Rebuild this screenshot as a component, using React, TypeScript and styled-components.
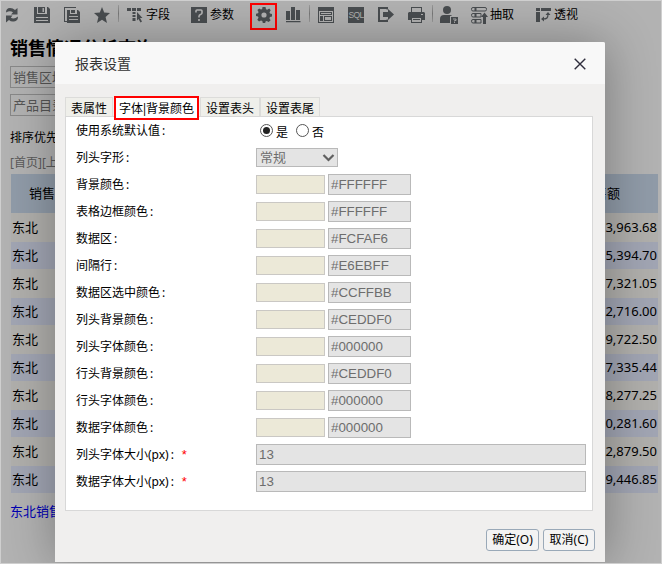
import React from "react";
import styled, { createGlobalStyle } from "styled-components";

const GlobalStyle = createGlobalStyle`
  * { box-sizing: border-box; }
  body {
    margin: 0;
    font-family: "Noto Sans", "Noto Sans CJK SC", sans-serif;
    font-size: 12px;
    color: #000;
  }
`;

const Page = styled.div`
  position: relative;
  width: 662px;
  height: 564px;
  overflow: hidden;
  background: #b2b2b2;
  border: 1px solid #cfcfcf;
`;

const Toolbar = styled.div`
  display: flex;
  align-items: center;
  height: 28px;
  color: #494d50;
`;

const Tool = styled.div<{ $gap: number }>`
  display: flex;
  flex: none;
  align-items: center;
  margin-left: ${(p) => p.$gap}px;
  svg { display: block; }
`;

const ToolText = styled.span<{ $gap: number }>`
  margin-left: ${(p) => p.$gap}px;
  width: 24px;
  line-height: 16px;
  white-space: nowrap;
  color: #000;
`;

const ActiveTool = styled.div`
  display: flex;
  flex: none;
  align-items: flex-start;
  justify-content: center;
  width: 27px;
  height: 27px;
  margin: 3px 0 0 16px;
  padding-top: 2px;
  border: 2px solid #fe0000;
`;

const Divider = styled.div<{ $gap: number }>`
  flex: none;
  width: 1px;
  height: 17px;
  margin: 0 0 3px ${(p) => p.$gap}px;
  background: linear-gradient(#9a9a9a, #777, #9a9a9a);
`;

const ReportTitle = styled.h1`
  margin: 6px 0 0 9px;
  height: 26px;
  font-size: 18px;
  line-height: 26px;
  font-weight: 700;
`;

const FilterBox = styled.div<{ $top: number }>`
  width: 160px;
  height: 22px;
  margin: ${(p) => p.$top}px 0 0 9px;
  padding-left: 2px;
  border: 1px solid #888;
  font-size: 13px;
  line-height: 20px;
  color: #555;
`;

const SortLine = styled.div`
  margin: 12px 0 0 9px;
  height: 20px;
  line-height: 20px;
`;

const Pager = styled.div`
  margin: 5px 0 0 9px;
  height: 20px;
  line-height: 20px;
  color: #5a5a5a;
`;

const Table = styled.div`
  width: 647px;
  margin: 1px 0 0 10px;
  font-size: 13px;
`;

const TableHead = styled.div`
  display: flex;
  justify-content: space-between;
  height: 39px;
  padding: 0 38px 0 18px;
  line-height: 39px;
  font-size: 13px;
  background: #909ba8;
`;

const TableRow = styled.div<{ $alt: boolean }>`
  display: flex;
  justify-content: space-between;
  height: ${(p) => (p.$alt ? 27 : 29)}px;
  padding: 0 1px;
  line-height: ${(p) => (p.$alt ? 27 : 29)}px;
  background: ${(p) => (p.$alt ? "#a1a5b3" : "#b0afac")};
`;

const Summary = styled.div`
  margin: 8px 0 0 9px;
  line-height: 20px;
  font-size: 13px;
  color: #0000b2;
`;

const Dialog = styled.section`
  position: absolute;
  left: 54px;
  top: 41px;
  width: 550px;
  height: 520px;
  display: flex;
  flex-direction: column;
  background: #f0efee;
  border-radius: 2px 2px 0 0;
  box-shadow: 1px 1px 50px rgba(0, 0, 0, 0.32);
`;

const DialogHeader = styled.header`
  display: flex;
  justify-content: space-between;
  align-items: center;
  height: 42px;
  padding: 0 19px 0 20px;
  background: #f8f8f8;
  border-radius: 2px 2px 0 0;
  font-size: 14px;
  color: #333;
  svg { display: block; margin-top: 1px; }
`;

const TabBar = styled.nav`
  display: flex;
  align-items: flex-start;
  height: 20px;
  margin: 12px 0 0 10px;
`;

const Tab = styled.div<{ $width: number }>`
  flex: none;
  width: ${(p) => p.$width}px;
  height: 19px;
  margin-top: 1px;
  border: 1px solid #dcdcda;
  border-bottom: none;
  background: #efefea;
  line-height: 21px;
  text-align: center;
  white-space: nowrap;
`;

const ActiveTab = styled.div`
  position: relative;
  z-index: 1;
  display: flex;
  flex: none;
  justify-content: center;
  width: 85px;
  height: 24px;
  margin: 0 1px 0 1px;
  border: 2px solid #fe0000;
  background: #fff;
  line-height: 21px;
  white-space: nowrap;
`;

const Bar = styled.span`
  display: flex;
  justify-content: center;
  width: 3px;
`;

const Panel = styled.div`
  width: 528px;
  height: 395px;
  margin-left: 10px;
  border: 1px solid #d8d8d8;
  background: #fff;
`;

const FormRow = styled.div`
  display: flex;
  align-items: center;
  height: 27px;
  padding-left: 10px;
`;

const Label = styled.label`
  display: flex;
  width: 180px;
  line-height: 18px;
  padding-top: 1px;
`;

const Colon = styled.span`
  width: 13px;
  padding-left: 2px;
`;

const Required = styled.span`
  font-family: "Liberation Sans", sans-serif;
  font-size: 13px;
  color: #f00;
`;

const RadioOption = styled.span<{ $gap: number }>`
  display: flex;
  align-items: center;
  margin-left: ${(p) => p.$gap}px;
  svg { display: block; }
`;

const RadioText = styled.span`
  margin: 4px 0 0 3px;
  line-height: 18px;
`;

const Select = styled.div`
  display: flex;
  align-items: center;
  justify-content: space-between;
  width: 82px;
  height: 19px;
  padding: 0 2px 0 3px;
  border: 1px solid #b9b9b9;
  background: #e4e4e4;
  color: #6d6d6d;
  font-size: 13px;
  line-height: 17px;
`;

const Swatch = styled.div`
  width: 69px;
  height: 19px;
  margin-right: 3px;
  border: 1px solid #cac8c4;
  background: #ece9d8;
`;

const Field = styled.div<{ $width: number }>`
  width: ${(p) => p.$width}px;
  height: 21px;
  padding-left: 2px;
  border: 1px solid #b9b9b9;
  background: #e4e4e4;
  color: #6d6d6d;
  font: 13.333px/19px "Liberation Sans", sans-serif;
`;

const Footer = styled.footer`
  display: flex;
  justify-content: flex-end;
  gap: 4px;
  padding: 18px 10px 0 0;
`;

const Button = styled.button<{ $width: number }>`
  width: ${(p) => p.$width}px;
  height: 22px;
  padding: 0;
  border: 1px solid #9aa9b8;
  border-radius: 3px;
  background: #f3f3f3;
  font: inherit;
  line-height: 20px;
  white-space: nowrap;
  color: #000;
`;

const Svg = ({ w = 16, h = 16, children }: { w?: number; h?: number; children: React.ReactNode }) => (
  <svg width={w} height={h} viewBox={`0 0 ${w} ${h}`} fill="currentColor">
    {children}
  </svg>
);

const RefreshIcon = () => (
  <Svg w={14}>
    <path d="M1 5.500Q1 1 5 1Q8 1 10 3L12.500 1V7.500H6L8 5.300Q5 3.200 1 5.500z" />
    <path d="M13 9.500Q13 14 9 14.500Q6 15 4 13L1 15.500V8.500H7.500L5.800 10.700Q9 12.500 13 9.500z" />
  </Svg>
);

const SaveIcon = () => (
  <Svg>
    <path fillRule="evenodd" d="M0 0h3v7h10V0h1l2 2v14H0zM2 10v1h12v-1zM2 13v1h12v-1z" />
    <path d="M4 0h7v6H4z" />
    <path fill="#aaa" d="M8.500 1h1.500v4H8.500z" />
  </Svg>
);

const SaveAsIcon = () => (
  <Svg w={17}>
    <path d="M0 0h12v1H1v13h3v1H0zM3 3h3v4h7V3h1l2 2v11H3z" />
    <path d="M7 3h4v3H7z" />
    <path d="M5 9.500h9M5 12.500h9" stroke="#aaa" />
  </Svg>
);

const StarIcon = () => (
  <Svg>
    <path d="M8 0l2.200 5.400L16 6l-4.400 3.900L13 16l-5-3.300L3 16l1.400-6.100L0 6l5.800-.6z" />
  </Svg>
);

const FieldIcon = () => (
  <Svg>
    <path d="M0 1h4v3H0zM5 1h4v3H5zM10 1h4v3h-4zM5.500 5h3v2h-3zM5.500 8h3v2h-3zM5.500 11h3v3h-3zM10 5l5.500 6h-2.500l2 3.500-1.500 1-2-3.500L10 13.500z" />
  </Svg>
);

const QuestionIcon = () => (
  <Svg>
    <path d="M0 0h16v16H0z" />
    <path d="M5 5.500V4q0-1 1-1h4q1 0 1 1v2q0 1-1.500 1.500T8 9.500V10.500M8 12v2" fill="none" stroke="#b5b5b5" strokeWidth="1.600" />
  </Svg>
);

const GearIcon = () => (
  <Svg>
    <path
      fillRule="evenodd"
      d="M6.500 0h3l.5 2.200 1.200.5L13.200 1.500l1.500 1.800-1.200 2 .5 1.200 2 .5v2.500l-2 .5-.6 1.300 1.200 2-1.900 1.700-2-1.100-1.200.5L9.200 16H6.800l-.5-2.100-1.300-.5-2 1.200-1.700-1.800 1.200-2L2 9.500 0 9V6.800l2-.5L2.600 5 1.400 3.100l1.800-1.700L5 2.600l1.200-.5zM8 5.400a2.600 2.600 0 100 5.200 2.600 2.600 0 000-5.200z"
    />
  </Svg>
);

const ChartIcon = () => (
  <Svg w={15}>
    <path d="M0 4h4v9H0zM5 0h4v13H5zM10 3h4v10h-4zM0 14h14.500v1.200H0z" />
  </Svg>
);

const FormIcon = () => (
  <Svg>
    <path fillRule="evenodd" d="M0 0h16v16H0zM1 4v11h14V4z" />
    <path fillRule="evenodd" d="M2 5h12v3H2zM2 9h3v5H2zM6 9h8v5H6zM7 10v3h6v-3zM3 6v1h10V6z" />
  </Svg>
);

const SqlText = styled.span`
  display: flex;
  justify-content: center;
  width: 16px;
  height: 16px;
  background: #494d50;
  color: #b2b2b2;
  font: 8.5px/17px "Liberation Sans", sans-serif;
  letter-spacing: -0.6px;
`;

const ExportIcon = () => (
  <Svg>
    <path d="M0 0h10v2.500H8.500V2H2v11h6.500v-.5H10V15H0z" />
    <path d="M5 5h5V2l6 5.500-6 5.500v-3H5z" />
  </Svg>
);

const PrinterIcon = () => (
  <Svg w={17}>
    <path fillRule="evenodd" d="M3 0h11v5H3zM4 1v4h9V1zM1 5h15l1 1v7h-3v-3H3v3H0V6zM13 7v1h2V7z" />
    <path fillRule="evenodd" d="M3 10h11v6H3zM4 11v4h9v-4zM5 12h7v1H5z" />
  </Svg>
);

const UserIcon = () => (
  <Svg w={18} h={18}>
    <circle cx="7" cy="4" r="4" />
    <path d="M0 17v-4q0-4 4-4h6q1.500 0 2 1h-2v7zM11 11h7v7h-7z" />
    <path d="M13 13h3v1.500h-1.500v1M14.500 16v1" fill="none" stroke="#aaa" />
  </Svg>
);

const ExtractIcon = () => (
  <Svg w={17} h={17}>
    <g fill="none" stroke="currentColor">
      <rect x="0.500" y="0.500" width="15" height="3.500" rx="1.500" />
      <path d="M10 10H2Q.5 10 .5 8.200T2 6.500h8zM10 16H2Q.5 16 .5 14.200T2 12.500h8z" />
      <path d="M4.500 0v4M4.500 6.500V10M4.500 12.500V16" strokeWidth="2" />
    </g>
    <path d="M13.500 5.500L17 10h-2v7h-3v-7h-2z" />
  </Svg>
);

const PivotIcon = () => (
  <Svg>
    <path d="M0 1h4v3H0zM5 1h10v3H5zM0 5h4v10H0z" />
    <path d="M7 12c4 0 5-1 5-5" stroke="currentColor" strokeWidth="1.200" fill="none" />
    <path d="M5 12l3-2.500v5zM12 5l-2.500 3h5z" />
  </Svg>
);

const CloseIcon = () => (
  <svg width="12" height="12" viewBox="0 0 12 12">
    <path d="M.7.7l10.600 10.600M11.300.7L.7 11.300" stroke="#2e2d3c" strokeWidth="1.400" />
  </svg>
);

const Radio = ({ checked }: { checked?: boolean }) => (
  <svg width="13" height="13" viewBox="0 0 13 13">
    <circle cx="6.500" cy="6.500" r="6" fill="#fff" stroke="#555" />
    {checked && <circle cx="6.500" cy="6.500" r="3.500" fill="#222" />}
  </svg>
);

const amounts = ["3,963.68", "5,394.70", "7,321.05", "2,716.00", "9,722.50", "7,335.44", "8,277.25", "0,281.60", "2,879.50", "9,446.85"];

const colors = [
  ["背景颜色", "#FFFFFF"],
  ["表格边框颜色", "#FFFFFF"],
  ["数据区", "#FCFAF6"],
  ["间隔行", "#E6EBFF"],
  ["数据区选中颜色", "#CCFFBB"],
  ["列头背景颜色", "#CEDDF0"],
  ["列头字体颜色", "#000000"],
  ["行头背景颜色", "#CEDDF0"],
  ["行头字体颜色", "#000000"],
  ["数据字体颜色", "#000000"],
];

const FormLabel = ({ text, required }: { text: string; required?: boolean }) => (
  <Label>
    {text}
    <Colon>:</Colon>
    {required && <Required>*</Required>}
  </Label>
);

export default function App() {
  return (
    <Page>
      <GlobalStyle />
      <Toolbar>
        <Tool $gap={4}><RefreshIcon /></Tool>
        <Tool $gap={15}><SaveIcon /></Tool>
        <Tool $gap={14}><SaveAsIcon /></Tool>
        <Tool $gap={13}><StarIcon /></Tool>
        <Divider $gap={8} />
        <Tool $gap={8}><FieldIcon /><ToolText $gap={3}>字段</ToolText></Tool>
        <Tool $gap={21}><QuestionIcon /><ToolText $gap={3}>参数</ToolText></Tool>
        <ActiveTool><GearIcon /></ActiveTool>
        <Tool $gap={9}><ChartIcon /></Tool>
        <Divider $gap={8} />
        <Tool $gap={8}><FormIcon /></Tool>
        <Tool $gap={14}><SqlText>SQL</SqlText></Tool>
        <Tool $gap={14}><ExportIcon /></Tool>
        <Tool $gap={14}><PrinterIcon /></Tool>
        <Divider $gap={7} />
        <Tool $gap={7}><UserIcon /></Tool>
        <Tool $gap={13}><ExtractIcon /><ToolText $gap={2}>抽取</ToolText></Tool>
        <Tool $gap={22}><PivotIcon /><ToolText $gap={2}>透视</ToolText></Tool>
      </Toolbar>
      <ReportTitle>销售情况分析查询</ReportTitle>
      <FilterBox $top={5}>销售区域</FilterBox>
      <FilterBox $top={6}>产品目录</FilterBox>
      <SortLine>排序优先级</SortLine>
      <Pager>[首页][上一页]</Pager>
      <Table>
        <TableHead>
          <span>销售区域</span>
          <span>销售额</span>
        </TableHead>
        {amounts.map((amount, i) => (
          <TableRow key={amount} $alt={i % 2 === 1}>
            <span>东北</span>
            <span>{amount}</span>
          </TableRow>
        ))}
      </Table>
      <Summary>东北销售</Summary>

      <Dialog>
        <DialogHeader>
          <span>报表设置</span>
          <CloseIcon />
        </DialogHeader>
        <TabBar>
          <Tab $width={48}>表属性</Tab>
          <ActiveTab>字体<Bar>|</Bar>背景颜色</ActiveTab>
          <Tab $width={60}>设置表头</Tab>
          <Tab $width={60}>设置表尾</Tab>
        </TabBar>
        <Panel>
          <FormRow>
            <FormLabel text="使用系统默认值" />
            <RadioOption $gap={4}><Radio checked /><RadioText>是</RadioText></RadioOption>
            <RadioOption $gap={8}><Radio /><RadioText>否</RadioText></RadioOption>
          </FormRow>
          <FormRow>
            <FormLabel text="列头字形" />
            <Select>
              常规
              <svg width="13" height="8" viewBox="0 0 13 8">
                <path d="M1.500 1l5 5 5-5" fill="none" stroke="#606060" strokeWidth="2.200" />
              </svg>
            </Select>
          </FormRow>
          {colors.map(([name, value]) => (
            <FormRow key={name}>
              <FormLabel text={name} />
              <Swatch />
              <Field $width={83}>{value}</Field>
            </FormRow>
          ))}
          <FormRow>
            <FormLabel text="列头字体大小(px)" required />
            <Field $width={330}>13</Field>
          </FormRow>
          <FormRow>
            <FormLabel text="数据字体大小(px)" required />
            <Field $width={330}>13</Field>
          </FormRow>
        </Panel>
        <Footer>
          <Button $width={53}>确定(O)</Button>
          <Button $width={52}>取消(C)</Button>
        </Footer>
      </Dialog>
    </Page>
  );
}
